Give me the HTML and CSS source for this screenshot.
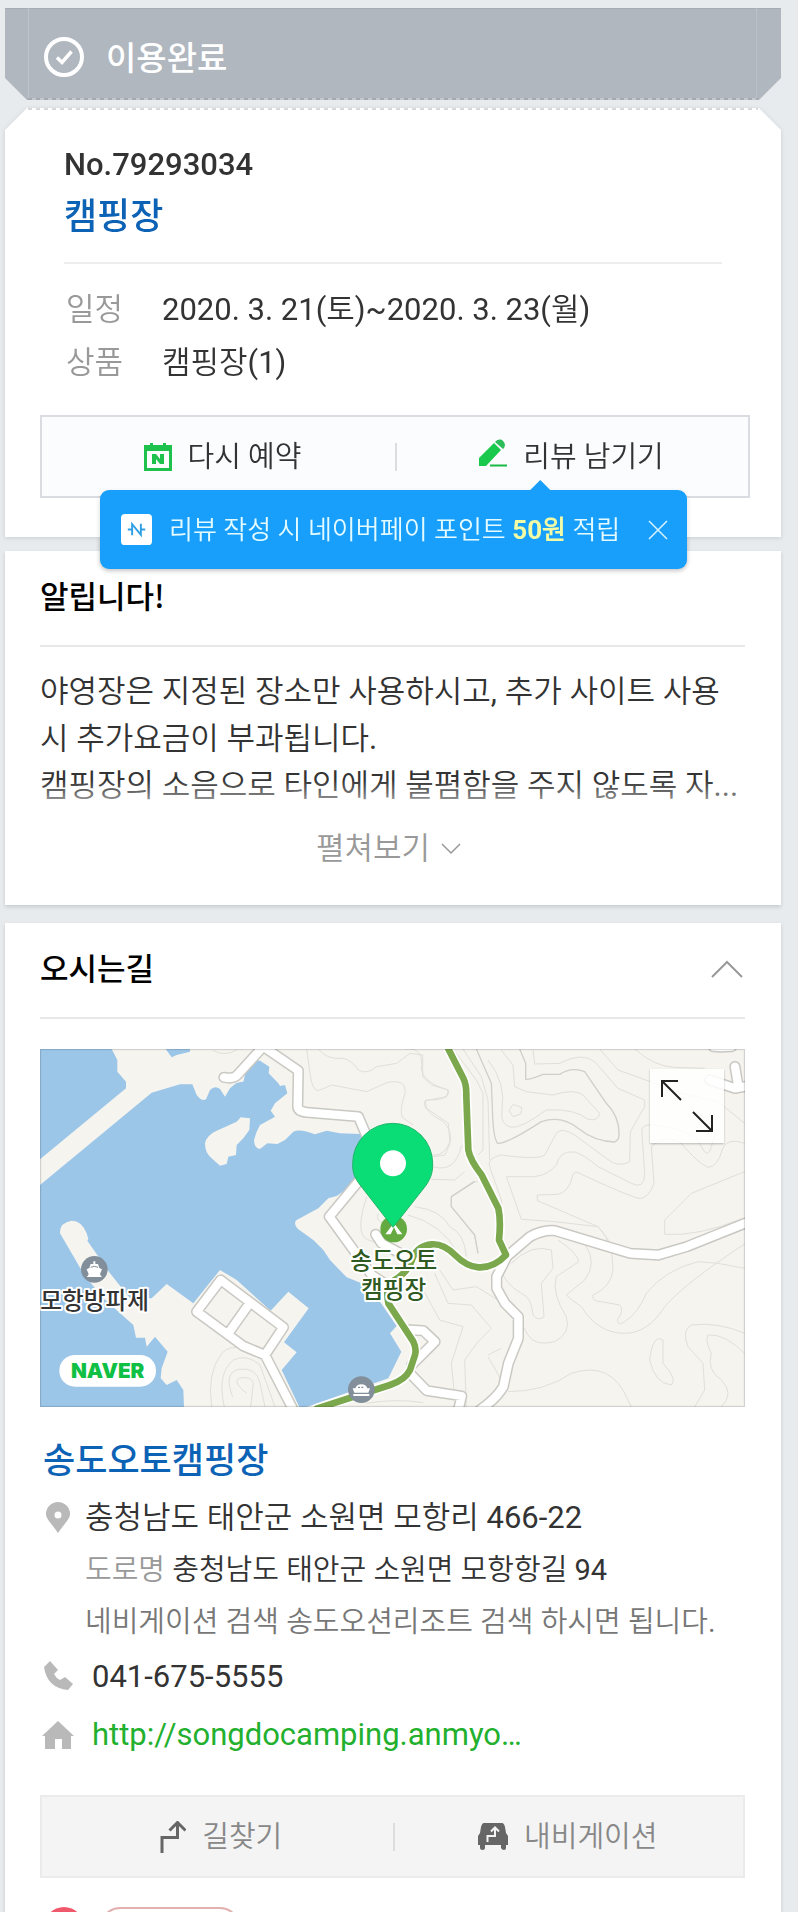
FILE: index.html
```html
<!DOCTYPE html>
<html lang="ko">
<head>
<meta charset="utf-8">
<meta name="viewport" content="width=device-width, initial-scale=1">
<title>예약 상세</title>
<link rel="stylesheet" href="styles.css">
</head>
<body>
<main class="page">
  <header class="status">
    <svg class="status-icon" viewBox="0 0 40 40" aria-hidden="true"><circle cx="20" cy="20" r="18" fill="none" stroke="#fff" stroke-width="4"/><path d="M13 20.500l5 5 9.500-11" fill="none" stroke="#fff" stroke-width="3.500"/></svg>
    <h1 class="status-text">이용완료</h1>
  </header>

  <section class="ticket">
    <div class="ticket-head">
      <p class="ticket-no">No.79293034</p>
      <h2 class="place-title"><a href="#place">캠핑장</a></h2>
    </div>
    <dl class="facts">
      <div class="fact"><dt>일정</dt><dd>2020. 3. 21(토)~2020. 3. 23(월)</dd></div>
      <div class="fact"><dt>상품</dt><dd>캠핑장(1)</dd></div>
    </dl>
    <div class="actions">
      <button class="action" type="button">
        <svg class="action-icon" viewBox="0 0 28 30" aria-hidden="true"><path d="M0 3h6V1h3v2h10V1h3v2h6v26H0zM3 9v17h22V9z" fill="#1ec14c" fill-rule="evenodd"/><path d="M8 22V12h4l4 5v-5h4v10h-4l-4-5v5z" fill="#1ec14c"/></svg>
        다시 예약
      </button>
      <button class="action" type="button">
        <svg class="action-icon action-icon-pen" viewBox="0 0 28 28" aria-hidden="true"><path d="M0 27v-8L15 4l7 7L7 27z" fill="#19c94b"/><path d="M16 3c3-3 6-3 8-1s3 5 0 8z" fill="#2bbd58"/><path d="M11 26.500h17" stroke="#19b944" stroke-width="2"/></svg>
        리뷰 남기기
      </button>
      <div class="tip" role="status">
        <svg class="tip-icon" viewBox="0 0 32 32" aria-hidden="true"><rect width="32" height="32" rx="4" fill="#fff"/><path d="M11.500 22V10.500l9 11V10M7 16h5M20 16h5" fill="none" stroke="#2f9fe6" stroke-width="2"/></svg>
        <p class="tip-text">리뷰 작성 시 네이버페이 포인트 <strong>50원</strong> 적립</p>
        <button class="tip-close" type="button" aria-label="닫기"><svg viewBox="0 0 20 20" aria-hidden="true"><path d="M1 1l18 18M19 1L1 19" stroke="#d9f3ff" stroke-width="1.500"/></svg></button>
      </div>
    </div>
  </section>

  <section class="card notice">
    <div class="card-head"><h2 class="card-title">알립니다!</h2></div>
    <div class="notice-body">
      <p>야영장은 지정된 장소만 사용하시고, 추가 사이트 사용 시 추가요금이 부과됩니다.</p>
      <p class="notice-last">캠핑장의 소음으로 타인에게 불폄함을 주지 않도록 자...</p>
    </div>
    <button class="more" type="button">펼쳐보기
      <svg class="more-icon" viewBox="0 0 20 12" aria-hidden="true"><path d="M1 1l9 9 9-9" fill="none" stroke="#999" stroke-width="1.500"/></svg>
    </button>
  </section>

  <section class="card way" id="place">
    <div class="card-head">
      <h2 class="card-title">오시는길</h2>
      <button class="fold" type="button" aria-label="접기"><svg viewBox="0 0 32 18" aria-hidden="true"><path d="M1 17L16 2l15 15" fill="none" stroke="#999" stroke-width="2"/></svg></button>
    </div>
    <div class="map">
      <svg class="map-image" viewBox="30 27 2115 1074" role="img" aria-label="송도오토캠핑장 지도">
        <rect x="30" y="27" width="2115" height="1074" fill="#f5f4ef"/>
        <g class="water">
          <path d="M30 27H245L262 60V95L288 125V145L30 358z"/>
          <path d="M407 27L425 52 440 45 480 35V27z"/>
          <path d="M30 435L365 158 450 133 487 133 500 165Q515 185 528 178L540 150Q555 135 570 147L585 170 600 145 618 130 632 126 640 125 650 85Q660 60 690 62L718 80 716 100 745 130 750 138 765 135 772 160 735 190 722 212 735 230 690 255 680 275 672 300Q672 325 690 327L712 310 742 312 765 300 790 275Q810 265 855 283L890 272 930 280 990 282 1020 300 990 420 920 468 895 475 865 505 800 540Q788 550 805 568L850 600 880 630 900 660 950 712 995 730 1040 770 1100 858 1080 880 1114 935 1075 1015 830 1101 808 1101 755 990 800 937 762 907 836 805 775 755 722 812 620 720 570 690 490 790 410 732 365 775 300 775 240 700 172 602 175 597 170 580Q155 542 125 542 88 548 90 580L160 700 215 770 310 855 318 893 345 893 350 920 375 890 413 935 395 985 392 1015 410 1035 440 1020 460 1050 462 1101H30z"/>
        </g>
        <path d="M525 310Q530 285 560 272L620 245 632 232 660 235 658 270 640 295 620 315 618 345 595 350 590 372 570 377 545 355Q525 340 525 310z" fill="#f5f4ef"/>
        <g class="contours">
          <path d="M830 27L840 100Q845 150 865 152L905 135 1010 155 1070 128Q1130 115 1125 160 1105 220 1120 235L1150 255M865 27Q890 60 940 55 965 60 985 90 1010 105 1040 80L1100 70 1140 40 1178 45 1178 110 1205 135 1255 150 1250 170 1185 182 1190 205 1255 250 1260 310 1245 345 1210 350M550 32Q585 50 620 30M1010 470Q980 560 1000 590 1020 610 1080 610M1045 520Q1035 540 1060 550M545 1101Q530 1000 575 940 600 915 635 925M583 1101Q560 1000 610 960 650 940 690 975L735 1101M608 1070Q580 1000 625 988 680 980 690 1030L705 1101M650 1060Q600 1020 635 1013 665 1010 670 1030L662 1101M1010 1090Q1100 1075 1180 1088"/>
          <g transform="translate(1104)">
            <path d="M165 27L235 120 255 160V330L240 345M195 27L250 110 270 180 275 360M310 30L345 75 350 140 385 155 465 165Q530 145 555 165L605 220Q600 245 570 238 530 205 445 210 370 265 340 262 305 255 312 210 325 130 270 60M333 212L345 193 372 203 368 222 345 230zM405 30L410 72 485 70Q550 35 590 65L660 145 740 180V200L697 275 695 365Q660 385 625 355L530 285Q490 260 475 280L440 345Q420 360 310 345 265 355 275 380L310 480 315 560M605 27L660 90 730 115 850 160 960 185 1040 250M710 27Q770 80 830 82L920 85M325 410L410 410Q450 405 475 375 485 330 530 336 560 345 600 380L700 430Q740 450 740 400L732 280Q725 245 780 258 890 270 910 320 930 360 940 320L955 270M325 410L370 538 470 545 600 560 635 605M760 320Q800 280 850 310 900 370 930 382 960 380 972 330 985 290 1040 310M760 320L768 430Q750 480 720 475 660 455 540 398 525 390 520 420 510 455 480 463L418 465V482L600 560Q645 600 645 690 640 740 585 765 580 785 610 785L665 795Q680 810 658 840 660 860 680 845 720 820 745 760 800 690 900 665L960 670 1040 685M1040 395L880 460 800 540V583Q900 590 1035 535M480 600Q540 640 542 665L475 710Q460 760 505 830 520 880 470 905 410 920 390 885L370 850M560 610Q600 670 560 720L505 765Q520 780 550 800 600 880 680 880 750 880 800 800 860 730 1040 612M340 670Q400 610 460 630L465 685 430 730 438 830Q420 845 405 825 400 770 370 760 320 730 310 690M240 425L225 425 160 470V500L230 585 240 640M100 418L170 420 200 395M50 500Q130 510 155 560 200 580 205 650M30 525Q130 550 180 640M125 690L165 750 235 740 300 780M110 700L150 790 220 795 280 865 240 905 200 960 205 1101M60 720L125 840 195 860 160 970 170 1070M330 1055Q440 1055 520 1000 640 960 690 1080L700 1101M270 945L310 925M270 950L310 1020M795 900Q765 880 755 960 770 1030 820 1035 840 1020 795 970zM1040 880Q960 845 880 855 850 870 870 920L915 970 920 1050 890 1101M1040 940Q980 880 930 885 920 900 940 940 925 990 970 1020 1010 1060 970 1101M20 27Q80 20 70 90 80 130 150 150 160 180 90 180 60 190 110 230 160 250 158 300 140 350 105 345M105 380Q170 400 190 320L205 310"/>
            <path class="contour-main" d="M235 27L280 130 283 200Q285 300 300 310 330 310 430 245 490 225 540 265 590 305 650 306 663 300 663 285 665 230 625 190L560 95Q520 80 485 103L435 103Q400 118 383 118V70L365 27M160 470L230 425M160 470V500L230 585 240 640"/>
          </g>
        </g>
        <g class="road-edge">
          <path d="M693 27L622 105Q610 118 582 112M700 20L805 92 803 200Q805 215 830 217L985 230 1015 300M985 425L898 530 1025 705 1070 735M1037 583L1055 610 1130 650M572 720L500 815 640 918 705 945 760 862zM655 795L595 880M705 945L790 1110M1430 650L1500 590Q1540 568 1575 572L1800 640 1885 645 1970 620 2155 546M1428 655L1400 710V745L1425 790 1465 830V895L1435 970 1420 1040Q1400 1075 1350 1110M1140 870L1180 872 1215 905 1145 975M1140 1000L1190 1052 1295 1068 1285 1110M2115 80L2125 140M2040 120L2115 145 2155 138"/>
          <path d="M2050 20L2072 21 2105 20"/>
        </g>
        <g class="road-fill">
          <path d="M693 27L622 105Q610 118 582 112M700 20L805 92 803 200Q805 215 830 217L985 230 1015 300M985 425L898 530 1025 705 1070 735M1037 583L1055 610 1130 650M572 720L500 815 640 918 705 945 760 862zM655 795L595 880M705 945L790 1110M1430 650L1500 590Q1540 568 1575 572L1800 640 1885 645 1970 620 2155 546M1428 655L1400 710V745L1425 790 1465 830V895L1435 970 1420 1040Q1400 1075 1350 1110M1140 870L1180 872 1215 905 1145 975M1140 1000L1190 1052 1295 1068 1285 1110M2115 80L2125 140M2040 120L2115 145 2155 138"/>
          <path d="M2050 20L2072 21 2105 20"/>
        </g>
        <path class="trail-edge" d="M1250 17L1300 115Q1310 135 1309 170L1315 330Q1320 360 1355 405L1405 505Q1413 540 1407 600L1428 645Q1390 685 1345 682 1310 680 1275 645 1240 610 1205 613 1165 617 1150 650 1135 700 1085 725 1065 740 1075 790L1150 905Q1160 925 1155 945L1140 990Q1125 1020 1080 1035L860 1106"/>
        <path class="trail" d="M1250 17L1300 115Q1310 135 1309 170L1315 330Q1320 360 1355 405L1405 505Q1413 540 1407 600L1428 645Q1390 685 1345 682 1310 680 1275 645 1240 610 1205 613 1165 617 1150 650 1135 700 1085 725 1065 740 1075 790L1150 905Q1160 925 1155 945L1140 990Q1125 1020 1080 1035L860 1106"/>
        <circle cx="1091" cy="567" r="40" fill="#64aa40"/>
        <path d="M1066 583L1087 555H1096L1117 583H1102L1092 562 1082 583z" fill="#fff"/>
        <path d="M1089 562L988 432C968 405 968 390 968 370A120 120 0 0 1 1208 370C1208 395 1205 410 1188 436z" fill="#0bdd76" stroke="#1fb568" stroke-width="3"/>
        <circle cx="1089" cy="370" r="39" fill="#fff"/>
        <circle cx="193" cy="688" r="40" fill="#828e99"/>
        <path d="M190 664h6v8h8l4 12 8 4-6 14q2 6 6 9h-46q4-3 6-9l-6-14 8-4 4-12h8z" fill="#fff"/><path d="M182 682q11-6 22 0" fill="none" stroke="#828e99" stroke-width="3"/>
        <circle cx="994" cy="1049" r="40" fill="#828e99"/>
        <path d="M968 1045h8q4-12 18-12t18 12h8l-5 13h-42zM970 1062h48v6h-48z" fill="#fff"/><path d="M984 1042h20" stroke="#828e99" stroke-width="4" stroke-dasharray="6 4"/>
        <text class="map-label" x="194" y="808">모항방파제</text>
        <text class="map-label map-label-camp"><tspan x="1091" y="688">송도오토</tspan><tspan x="1091" y="775">캠핑장</tspan></text>
        <rect x="88" y="945" width="290" height="95" rx="47" fill="#fff"/>
        <text class="map-brand" x="233" y="1014">NAVER</text>
        <rect x="31" y="28" width="2113" height="1072" fill="none" stroke="#000" stroke-opacity=".14" stroke-width="5"/>
      </svg>
      <button class="expand" type="button" aria-label="지도 크게 보기"><svg viewBox="0 0 74 74" aria-hidden="true"><path d="M12 28V12h16M12 12l19 19M62 46v16H46M62 62L43 43" fill="none" stroke="#222" stroke-width="2"/></svg></button>
    </div>

    <h3 class="place-title place-name"><a href="#place">송도오토캠핑장</a></h3>
    <address class="contact">
      <div class="address">
        <svg class="contact-icon" viewBox="0 0 32 32" aria-hidden="true"><path d="M16 31C10 22 4 17 4 12a12 12 0 0 1 24 0c0 5-6 10-12 19z" fill="#b9b9b9"/><circle cx="16" cy="13" r="3.500" fill="#fff"/></svg>
        <div class="address-lines">
          <p>충청남도 태안군 소원면 모항리 466-22</p>
          <p class="address-road"><span class="address-kind">도로명</span> 충청남도 태안군 소원면 모항항길 94</p>
          <p class="address-hint">네비게이션 검색 송도오션리조트 검색 하시면 됩니다.</p>
        </div>
      </div>
      <div class="contact-row">
        <svg class="contact-icon" viewBox="0 0 32 32" aria-hidden="true"><path d="M2 6l6-6 8 9-4 4q2 4 6 6l5-3 8 7-5 6Q5 27 2 6z" fill="#b9b9b9"/></svg>
        <a class="phone" href="tel:041-675-5555">041-675-5555</a>
      </div>
      <div class="contact-row">
        <svg class="contact-icon" viewBox="0 0 32 32" aria-hidden="true"><path d="M0 17L16 2l16 15h-3v13h-9V20h-7v10H3V17z" fill="#b9b9b9"/></svg>
        <a class="site" href="#site">http://songdocamping.anmyo…</a>
      </div>
    </address>
    <div class="routes">
      <button class="route" type="button">
        <svg class="route-icon" viewBox="0 0 26 32" aria-hidden="true"><path d="M2 32V16.500h15.500V3M9.500 9.500l8-8 8 8" fill="none" stroke="#666" stroke-width="3"/></svg>
        길찾기
      </button>
      <button class="route" type="button">
        <svg class="route-icon route-icon-car" viewBox="0 0 30 27" aria-hidden="true"><path d="M6 0h18q2 0 3 4l1 6 2 3v9h-2v3q0 2-2 2t-3-2v-3H7v3q0 2-2.500 2T2 25v-3H0v-9l2-3 1-6q1-4 3-4z" fill="#666"/><path d="M9.500 19v-6H17V5M13 8.500l4-4 4 4" fill="none" stroke="#f4f4f4" stroke-width="2"/></svg>
        내비게이션
      </button>
    </div>
    <div class="next" aria-hidden="true"><span class="next-dot"></span><span class="next-pill"></span></div>
  </section>
</main>
</body>
</html>
```

FILE: styles.css
```css
* { box-sizing: border-box; }

body, h1, h2, h3, p, dl, dd { margin: 0; }

body {
  background: #e7ebee;
  color: #333;
  font: 400 31px/46px Roboto, "Noto Sans CJK KR DemiLight", "Noto Sans CJK KR", sans-serif;
}

a { color: inherit; text-decoration: none; }

button {
  padding: 0;
  border: 0;
  background: none;
  color: inherit;
  font: inherit;
  cursor: pointer;
}

svg { display: block; }

.page {
  height: 100vh;
  overflow: hidden;
  padding: 8px 17px 0 5px;
}

.status-text, .place-title, .card-title, .map-label {
  font-family: "Noto Sans CJK KR Medium", "Noto Sans CJK KR", sans-serif;
}

/* Status banner with cut lower corners */
.status {
  display: flex;
  align-items: center;
  gap: 22px;
  height: 92px;
  padding: 6px 39px 0;
  background:
    repeating-linear-gradient(90deg, #a3a9af 0 4px, #c3c8cc 4px 8px) 23px 100% / calc(100% - 46px) 2px no-repeat,
    linear-gradient(90deg, transparent 23px, #bdc4ca 23px 24px, transparent 24px calc(100% - 25px), #bbc1c7 calc(100% - 25px) calc(100% - 24px), transparent 0),
    linear-gradient(#a5acb3 1px, #b0b7bf 1px);
  clip-path: polygon(0 0, 100% 0, 100% 70px, calc(100% - 22px) 100%, 22px 100%, 0 70px);
  color: #fff;
}

.status-icon { width: 40px; height: 40px; }

.status-text { margin-bottom: 2px; font-size: 33px; font-weight: 500; }

/* Reservation ticket with cut upper corners */
.ticket {
  position: relative;
  z-index: 1;
  margin-top: 8px;
  padding: 34px 31px 39px 35px;
  filter: drop-shadow(0 1px 2px rgba(0, 0, 0, 0.12));
}

.ticket::before {
  content: "";
  position: absolute;
  z-index: -1;
  inset: 0;
  background:
    repeating-linear-gradient(90deg, #d5d9dc 0 4px, #fff 4px 8px) 23px 0 / calc(100% - 46px) 2px no-repeat,
    #fff;
  clip-path: polygon(22px 0, calc(100% - 22px) 0, 100% 22px, 100% 100%, 0 100%, 0 22px);
}

.ticket-head {
  margin: 0 28px 0 24px;
  padding-bottom: 24px;
  border-bottom: 2px solid #eee;
}

.ticket-no { font-weight: 500; }

.place-title {
  color: #0c62b5;
  font-size: 36px;
  font-weight: 500;
  line-height: 50px;
}

.facts {
  margin: 19px 24px 26px;
  line-height: 53px;
}

.fact { display: flex; }

.fact dt { flex: 0 0 98px; padding-left: 2px; color: #999; }

.actions, .routes {
  position: relative;
  display: grid;
  grid-template-columns: 1fr 1fr;
  height: 83px;
  border: 2px solid #d9dce0;
  background: #fbfcfe;
  font-size: 29px;
}

.action, .route {
  display: flex;
  align-items: center;
  justify-content: center;
  gap: 16px;
}

.action:first-child, .route:first-child { padding-left: 8px; }

.action + .action, .route + .route {
  background: linear-gradient(#ddd, #ddd) 0 50% / 2px 28px no-repeat;
}

.action-icon { width: 28px; height: 30px; }

.action-icon-pen { height: 28px; margin-bottom: 8px; }

.tip {
  position: absolute;
  top: 73px;
  left: 58px;
  right: 61px;
  display: flex;
  align-items: center;
  gap: 17px;
  height: 79px;
  padding: 0 19px 0 21px;
  border-radius: 9px;
  background: #179ffb;
  box-shadow: 0 2px 5px rgba(0, 0, 0, 0.15);
  color: #e3faff;
  font-size: 26px;
  white-space: nowrap;
}

.tip::before {
  content: "";
  position: absolute;
  bottom: 100%;
  left: calc(75% - 10px);
  width: 20px;
  height: 10px;
  background: #179ffb;
  clip-path: polygon(50% 0, 100% 100%, 0 100%);
}

.tip-icon { width: 31px; height: 31px; }

.tip strong { color: #f2fba6; font-weight: 700; }

.tip-close { width: 20px; height: 20px; margin-left: auto; }

/* White content cards */
.card {
  margin-top: 14px;
  padding: 0 36px 0 35px;
  background: #fff;
  box-shadow: 0 2px 4px rgba(0, 0, 0, 0.14);
}

.card-head {
  display: flex;
  align-items: center;
  justify-content: space-between;
  height: 96px;
  padding-bottom: 2px;
  border-bottom: 2px solid #e6e8ea;
}

.card-title { margin-bottom: 4px; color: #000; font-size: 31px; font-weight: 500; }

.notice { padding-bottom: 32px; }

.notice-body {
  position: relative;
  padding: 21px 0 15px;
  line-height: 47px;
}

.notice-body::after {
  content: "";
  position: absolute;
  inset: auto 0 0;
  height: 44px;
  background: linear-gradient(rgba(255, 255, 255, 0), #fff);
}

.notice-last { overflow: hidden; white-space: nowrap; }

.more {
  display: flex;
  align-items: center;
  justify-content: center;
  gap: 11px;
  width: 100%;
  height: 49px;
  padding-right: 8px;
  color: #999;
}

.more-icon { width: 20px; height: 12px; }

.way { margin-top: 18px; }

.fold { width: 32px; height: 18px; margin-right: 2px; }

/* Map */
.map { position: relative; margin-top: 30px; }

.map-image { width: 100%; height: auto; }

.water { fill: #9cc6e8; }

.contours { fill: none; stroke: #e0dfda; stroke-width: 3; stroke-linejoin: round; }

.contour-main { stroke: #d0cfca; stroke-width: 4; }

.road-edge, .road-fill, .trail, .trail-edge {
  fill: none;
  stroke-linecap: round;
  stroke-linejoin: round;
}

.road-edge { stroke: #c9c8c3; stroke-width: 34; }

.road-fill { stroke: #fff; stroke-width: 25; }

.trail-edge { stroke: #fff; stroke-width: 30; }

.trail { stroke: #7ba84d; stroke-width: 20; }

.map-label {
  fill: #333;
  stroke: #fff;
  stroke-width: 12;
  stroke-linejoin: round;
  paint-order: stroke;
  font-size: 71px;
  font-weight: 700;
  text-anchor: middle;
}

.map-label-camp { fill: #2f5a22; }

.map-brand {
  fill: #10c044;
  font: 900 62px Inter, sans-serif;
  text-anchor: middle;
}

.expand {
  position: absolute;
  top: 20px;
  right: 21px;
  width: 74px;
  height: 74px;
  background: rgba(255, 255, 255, 0.85);
  box-shadow: 0 1px 2px rgba(0, 0, 0, 0.25);
}

/* Place details */
.place-name { margin: 26px 0 9px 3px; font-size: 35px; }

.contact { font-style: normal; }

.address, .contact-row { display: flex; }

.address { gap: 11px; padding-left: 2px; line-height: 52px; }

.contact-row { align-items: center; gap: 18px; padding-left: 2px; line-height: 58px; }

.contact-icon { flex: none; width: 32px; height: 32px; }

.address .contact-icon { margin-top: 10px; }

.address-road, .address-hint { font-size: 29px; }

.address-kind { color: #999; }

.address-hint { color: #777; }

.site { color: #22b02e; }

.routes {
  margin-top: 31px;
  border-color: #ebebeb;
  background: #f4f4f4;
  color: #888;
}

.route-icon { width: 26px; height: 32px; }

.route-icon-car { width: 30px; height: 27px; }

.next { display: flex; gap: 16px; margin-top: 29px; padding-left: 4px; }

.next-dot { width: 40px; height: 40px; border-radius: 50%; background: #f0596b; }

.next-pill { width: 140px; height: 40px; border: 2px solid #e3b0b0; border-radius: 20px; }
```
